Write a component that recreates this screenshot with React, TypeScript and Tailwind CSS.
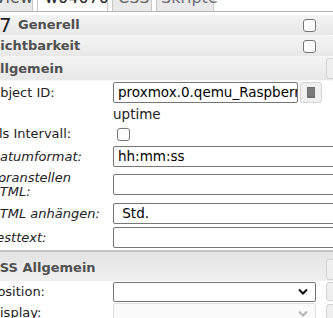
import React from 'react';

const font = "font-['DejaVu_Sans',Verdana,sans-serif]";

function Checkbox({ className = '' }: { className?: string }) {
  return (
    <span className={`block w-[13px] h-[13px] rounded-[3px] border border-[#767676] bg-white ${className}`} />
  );
}

function Header({ title, h, titleW = 'w-[313px]', children }: { title: React.ReactNode; h: string; titleW?: string; children?: React.ReactNode }) {
  return (
    <div className={`flex items-center shrink-0 overflow-hidden ${h} bg-gradient-to-b from-[#f4f4f4] to-[#e8e8e8] border-b border-[#f7f7f7]`}>
      <div className={`${titleW} shrink-0 flex items-center text-[13px] leading-[16px] font-bold text-[#505050]`}>{title}</div>
      {children}
    </div>
  );
}

function Row({ label, italic, h, children }: { label: React.ReactNode; italic?: boolean; h: string; children?: React.ReactNode }) {
  return (
    <div className={`flex items-center shrink-0 ${h}`}>
      <div className={`w-[123px] shrink-0 text-[13px] leading-[14px] text-[#222] ${italic ? 'italic' : ''}`}>{label}</div>
      <div className="flex items-center">{children}</div>
    </div>
  );
}

function Input({ value = '', w }: { value?: string; w: string }) {
  return (
    <div className={`${w} h-[21px] border border-[#767676] rounded-[2px] bg-white pl-[4px] text-[13.5px] leading-[19px] text-black whitespace-nowrap overflow-hidden`}>
      {value}
    </div>
  );
}

function SmallBtn({ children, className = '' }: { children?: React.ReactNode; className?: string }) {
  return (
    <div className={`w-[22px] flex items-center justify-center bg-[#efefef] border border-[#d3d3d3] rounded-[3px] ${className}`}>
      {children}
    </div>
  );
}

function Chevron({ color }: { color: string }) {
  return (
    <svg width="10" height="7" viewBox="0 0 10 7">
      <path d="M1 1.5 L5 5.5 L9 1.5" fill="none" stroke={color} strokeWidth="2" />
    </svg>
  );
}

function Tab({ label, w, pl, active, color }: { label: string; w: string; pl: string; active?: boolean; color: string }) {
  return (
    <div
      className={`shrink-0 ${w} ${pl} h-[26px] border border-[#c8c8c8] border-b-0 text-[16px] leading-[16px] pt-[4px] ${color} ${
        active ? 'bg-white' : 'bg-[#e9e9e9]'
      }`}
    >
      {label}
    </div>
  );
}

export default function App() {
  return (
    <div className={`w-[333px] h-[318px] overflow-hidden bg-white ${font}`}>
      <div className="w-[370px] -ml-[10px] flex flex-col">
        {/* tabs */}
        <div className="flex items-end gap-[4px] h-[12px] shrink-0 border-b border-[#b5b5b5] overflow-hidden">
          <Tab label="View" w="w-[43px]" pl="pl-[4px]" color="text-[#555]" />
          <Tab label="w04070" w="w-[71px]" pl="pl-[7px]" color="text-[#222]" active />
          <Tab label="CSS" w="w-[40px]" pl="pl-[5px]" color="text-[#666]" />
          <Tab label="Skripte" w="w-[58px]" pl="pl-[4px]" color="text-[#6b6b78]" />
        </div>
        <div className="h-[3px] shrink-0" />

        <Header
          h="h-[21px]"
          title={
            <>
              <span className="w-[28px] pl-[9px] text-[20px] font-normal leading-[16px] text-[#222]">7</span>
              <span>Generell</span>
            </>
          }
        >
          <Checkbox />
        </Header>
        <Header h="h-[21px]" title={<span className="pl-[1px]">Sichtbarkeit</span>}>
          <Checkbox />
        </Header>
        <Header h="h-[24px]" titleW="w-[336px]" title={<span>Allgemein</span>}>
          <SmallBtn className="h-[21px] text-[10px] text-[#888]">-</SmallBtn>
        </Header>

        <Row label="Object ID:" h="h-[23px]">
          <Input value="proxmox.0.qemu_Raspberry" w="w-[185px]" />
          <SmallBtn className="ml-[2px] h-[21px]">
            <svg width="8" height="11" viewBox="0 0 8 11">
              <rect x="0" y="0" width="8" height="11" fill="#6e6e6e" />
              <path d="M1 2H7M1 4H7M1 6H7M1 8H7" stroke="#8e8e8e" strokeWidth="0.8" />
            </svg>
          </SmallBtn>
        </Row>
        <Row label="" h="h-[19px]">
          <span className="text-[13.5px] leading-[16px] text-[#222]">uptime</span>
        </Row>
        <Row label="Als Intervall:" h="h-[22px]">
          <Checkbox className="ml-[4px]" />
        </Row>
        <Row label="Datumformat:" italic h="h-[23px]">
          <Input value="hh:mm:ss" w="w-[240px]" />
        </Row>
        <Row label={<>Voranstellen<br />HTML:</>} italic h="h-[33px]">
          <Input w="w-[240px]" />
        </Row>
        <div className="h-[1px] shrink-0" />
        <Row label="HTML anhängen:" italic h="h-[23px]">
          <Input value={'\u00a0Std.'} w="w-[240px]" />
        </Row>
        <Row label="Testtext:" italic h="h-[25px]">
          <Input w="w-[240px]" />
        </Row>

        <div className="h-[2px] shrink-0 bg-[#c4c4c4]" />
        <div className="flex items-center shrink-0 h-[29px] bg-gradient-to-b from-[#e3e3e3] to-[#f0f0f0]">
          <div className="w-[336px] shrink-0 pt-[3px] text-[13px] leading-[16px] font-bold text-[#505050]">CSS Allgemein</div>
          <SmallBtn className="h-[21px] mt-[5px] text-[10px] text-[#888]">-</SmallBtn>
        </div>
        <Row label="Position:" h="h-[21px]">
          <div className="w-[203px] h-[20px] border border-[#767676] rounded-[2px] bg-white flex items-center justify-end pr-[7px]">
            <Chevron color="#111" />
          </div>
          <SmallBtn className="ml-[10px] h-[19px] text-[9px] font-bold text-[#555]">¶</SmallBtn>
        </Row>
        <Row label="Display:" h="h-[22px]">
          <div className="w-[203px] h-[20px] border border-[#e0e0e0] rounded-[2px] bg-[#fafafa] flex items-center justify-end pr-[7px]">
            <Chevron color="#b5b5b5" />
          </div>
          <SmallBtn className="ml-[10px] h-[19px] text-[9px] font-bold text-[#555]">¶</SmallBtn>
        </Row>
      </div>
    </div>
  );
}
